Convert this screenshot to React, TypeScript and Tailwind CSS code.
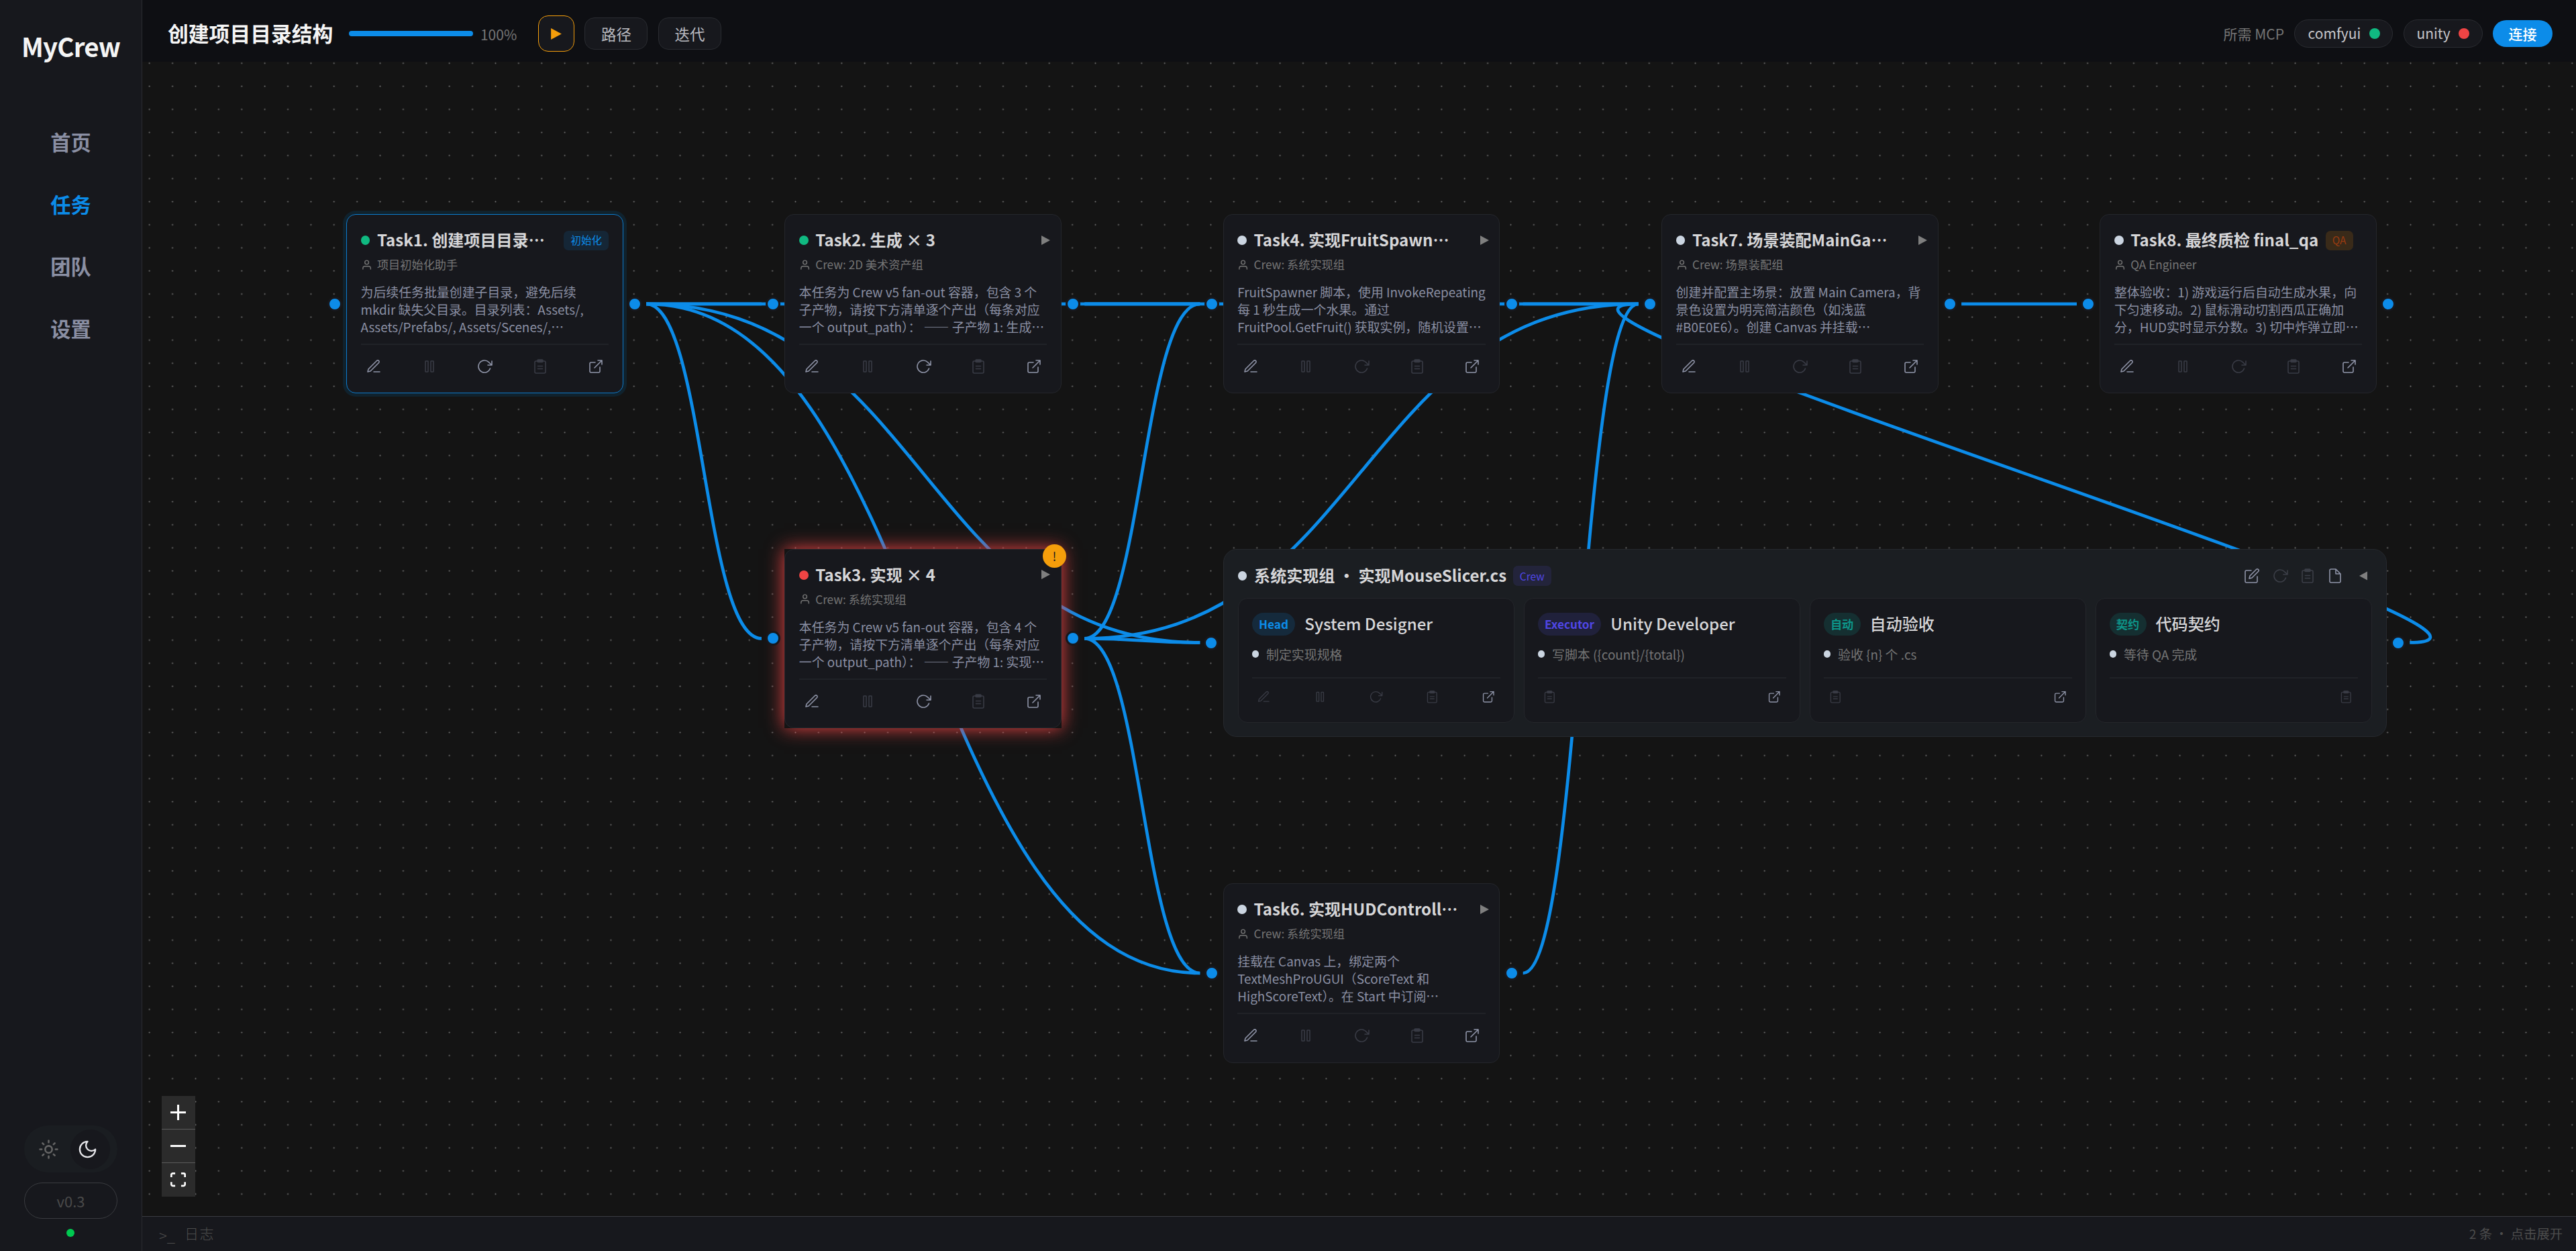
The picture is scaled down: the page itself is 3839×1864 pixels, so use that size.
import type { ReactNode } from "react";

const ORIGIN_X = 212;
const ORIGIN_Y = 92;
const NODE_W = 412.6;

type Tag = { label: string; cls: string };
type Action = "edit" | "pause" | "retry" | "clip" | "open" | "compose" | "file";

type TaskNode = {
  id: string;
  x: number;
  y: number;
  title: string;
  owner: string;
  lines: string[];
  dot: string;
  tag?: Tag;
  expandable?: boolean;
  enabled: Action[];
  variant?: "selected" | "failed";
};

const ROW1 = 319.1;
const ROW2 = 817.7;
const ROW3 = 1316.3;
const COL = [516, 1169.3, 1822.7, 2476.1, 3129.4];

const GREEN = "bg-[#10b981]";
const RED = "bg-[#ef4444]";
const IDLE = "bg-[#cbd5e1]";

const tasks: TaskNode[] = [
  {
    id: "t1",
    x: COL[0],
    y: ROW1,
    title: "Task1. 创建项目目录…",
    owner: "项目初始化助手",
    lines: ["为后续任务批量创建子目录，避免后续", "mkdir 缺失父目录。目录列表：Assets/,", "Assets/Prefabs/, Assets/Scenes/,…"],
    dot: GREEN,
    tag: { label: "初始化", cls: "bg-[#152636] text-[#0c8ce9]" },
    enabled: ["edit", "retry", "open"],
    variant: "selected",
  },
  {
    id: "t2",
    x: COL[1],
    y: ROW1,
    title: "Task2. 生成 × 3",
    owner: "Crew: 2D 美术资产组",
    lines: ["本任务为 Crew v5 fan-out 容器，包含 3 个", "子产物，请按下方清单逐个产出（每条对应", "一个 output_path）： —— 子产物 1: 生成…"],
    dot: GREEN,
    expandable: true,
    enabled: ["edit", "retry", "open"],
  },
  {
    id: "t4",
    x: COL[2],
    y: ROW1,
    title: "Task4. 实现FruitSpawn…",
    owner: "Crew: 系统实现组",
    lines: ["FruitSpawner 脚本，使用 InvokeRepeating", "每 1 秒生成一个水果。通过", "FruitPool.GetFruit() 获取实例，随机设置…"],
    dot: IDLE,
    expandable: true,
    enabled: ["edit", "open"],
  },
  {
    id: "t7",
    x: COL[3],
    y: ROW1,
    title: "Task7. 场景装配MainGa…",
    owner: "Crew: 场景装配组",
    lines: ["创建并配置主场景：放置 Main Camera，背", "景色设置为明亮简洁颜色（如浅蓝", "#B0E0E6）。创建 Canvas 并挂载…"],
    dot: IDLE,
    expandable: true,
    enabled: ["edit", "open"],
  },
  {
    id: "t8",
    x: COL[4],
    y: ROW1,
    title: "Task8. 最终质检 final_qa",
    owner: "QA Engineer",
    lines: ["整体验收：1) 游戏运行后自动生成水果，向", "下匀速移动。2) 鼠标滑动切割西瓜正确加", "分，HUD实时显示分数。3) 切中炸弹立即…"],
    dot: IDLE,
    tag: { label: "QA", cls: "bg-[#392a19] text-[#9a3b10]" },
    enabled: ["edit", "open"],
  },
  {
    id: "t3",
    x: COL[1],
    y: ROW2,
    title: "Task3. 实现 × 4",
    owner: "Crew: 系统实现组",
    lines: ["本任务为 Crew v5 fan-out 容器，包含 4 个", "子产物，请按下方清单逐个产出（每条对应", "一个 output_path）： —— 子产物 1: 实现…"],
    dot: RED,
    expandable: true,
    enabled: ["edit", "retry", "open"],
    variant: "failed",
  },
  {
    id: "t6",
    x: COL[2],
    y: ROW3,
    title: "Task6. 实现HUDControll…",
    owner: "Crew: 系统实现组",
    lines: ["挂载在 Canvas 上，绑定两个", "TextMeshProUGUI（ScoreText 和", "HighScoreText）。在 Start 中订阅…"],
    dot: IDLE,
    expandable: true,
    enabled: ["edit", "open"],
  },
];

const steps: { role: Tag; name: string; status: string; actions: Action[]; align: string }[] = [
  {
    role: { label: "Head", cls: "bg-[#152a3c] text-[#0c8ce9]" },
    name: "System Designer",
    status: "制定实现规格",
    actions: ["edit", "pause", "retry", "clip", "open"],
    align: "justify-between",
  },
  {
    role: { label: "Executor", cls: "bg-[#20213b] text-[#4f46e5]" },
    name: "Unity Developer",
    status: "写脚本 ({count}/{total})",
    actions: ["clip", "open"],
    align: "justify-between",
  },
  {
    role: { label: "自动", cls: "bg-[#152f31] text-[#0d9488]" },
    name: "自动验收",
    status: "验收 {n} 个 .cs",
    actions: ["clip", "open"],
    align: "justify-between",
  },
  {
    role: { label: "契约", cls: "bg-[#152f31] text-[#0d9488]" },
    name: "代码契约",
    status: "等待 QA 完成",
    actions: ["clip"],
    align: "justify-end",
  },
];

/* ---------- edges ---------- */

const OUT = (col: number, y: number) => [COL[col] + NODE_W + 34.4, y];
const IN = (col: number, y: number) => [COL[col] - 34.4, y];
const Y1 = 452.8;
const Y2 = 951.4;
const Y3 = 1450;
const YG = 957.4;

const links: [number[], number[]][] = [
  [OUT(0, Y1), IN(1, Y1)],
  [OUT(0, Y1), IN(1, Y2)],
  [OUT(0, Y1), IN(2, Y1)],
  [OUT(0, Y1), IN(2, YG)],
  [OUT(0, Y1), IN(2, Y3)],
  [OUT(1, Y1), IN(2, Y1)],
  [OUT(1, Y1), IN(3, Y1)],
  [OUT(1, Y2), IN(2, Y1)],
  [OUT(1, Y2), IN(2, YG)],
  [OUT(1, Y2), IN(2, Y3)],
  [OUT(1, Y2), IN(3, Y1)],
  [OUT(2, Y1), IN(3, Y1)],
  [[3591.2, YG], IN(3, Y1)],
  [OUT(2, Y3), IN(3, Y1)],
  [OUT(3, Y1), IN(4, Y1)],
];

function bezier([sx, sy]: number[], [tx, ty]: number[]) {
  const d = tx - sx;
  const c = d >= 0 ? d / 2 : 0.25 * 25 * Math.sqrt(-d / 1.7193) * 1.7193;
  return `M${sx},${sy} C${sx + c},${sy} ${tx - c},${ty} ${tx},${ty}`;
}

/* ---------- icons ---------- */

const shapes: Record<Action, ReactNode> = {
  edit: <path d="M12 20h9M16.5 3.5a2.121 2.121 0 0 1 3 3L7 19l-4 1 1-4L16.5 3.5z" />,
  pause: (
    <>
      <rect x="6" y="4" width="4" height="16" rx="0.6" />
      <rect x="14" y="4" width="4" height="16" rx="0.6" />
    </>
  ),
  retry: <path d="M23 4v6h-6M20.49 15a9 9 0 1 1-2.12-9.36L23 10" />,
  clip: (
    <>
      <path d="M16 4h2a2 2 0 0 1 2 2v14a2 2 0 0 1-2 2H6a2 2 0 0 1-2-2V6a2 2 0 0 1 2-2h2M8.5 11.5h7M8.5 15.5h7" />
      <rect x="8" y="2" width="8" height="3.4" rx="1" fill="currentColor" />
    </>
  ),
  open: <path d="M18 13v6a2 2 0 0 1-2 2H5a2 2 0 0 1-2-2V8a2 2 0 0 1 2-2h6M15 3h6v6M10 14L21 3" />,
  compose: (
    <path d="M11 4H4a2 2 0 0 0-2 2v14a2 2 0 0 0 2 2h14a2 2 0 0 0 2-2v-7M18.5 2.5a2.121 2.121 0 0 1 3 3L12 15l-4 1 1-4 9.5-9.5z" />
  ),
  file: <path d="M13 2H6a2 2 0 0 0-2 2v16a2 2 0 0 0 2 2h12a2 2 0 0 0 2-2V9l-7-7zM13 2v7h7" />,
};

function Icon({ name, cls }: { name: Action; cls: string }) {
  return (
    <svg viewBox="0 0 24 24" className={cls} fill="none" stroke="currentColor" strokeWidth="1.6" strokeLinecap="round" strokeLinejoin="round">
      {shapes[name]}
    </svg>
  );
}

function Triangle({ cls }: { cls: string }) {
  return (
    <svg viewBox="0 0 13 14" className={cls} fill="currentColor">
      <path d="M0 0L13 7L0 14z" />
    </svg>
  );
}

/* ---------- nodes ---------- */

function Port({ side, bordered }: { side: "left" | "right"; bordered?: boolean }) {
  const place =
    side === "left" ? (bordered ? "-left-[29.3px]" : "-left-[28.2px]") : bordered ? "-right-[29.5px]" : "-right-[28.5px]";
  return <span className={`absolute top-1/2 -mt-[11px] size-[22px] rounded-full border-[3px] border-[#17181d] bg-[#0c8ce9] ${place}`} />;
}

const rowActions: Action[] = ["edit", "pause", "retry", "clip", "open"];

function Task({ t }: { t: TaskNode }) {
  const shell =
    t.variant === "selected"
      ? "rounded-[14px] border-[#0c7bcd] shadow-[0_0_0_5px_#10222d]"
      : "rounded-[14px] border-[#24262b]";
  return (
    <div
      className={`absolute h-[267.4px] w-[412.6px] ${t.variant === "failed" ? "shadow-[0_0_26px_#ef4444]" : ""}`}
      style={{ left: t.x - ORIGIN_X, top: t.y - ORIGIN_Y }}
    >
      <div className={`flex h-full flex-col border bg-[#17181d] px-[20.5px] pt-[23px] ${shell}`}>
        <div className="flex h-[30px] items-center">
          <span className={`mr-[10.6px] size-[13.8px] shrink-0 rounded-full ${t.dot}`} />
          <span className="-mt-[2px] text-[24.07px] leading-[30px] font-bold whitespace-nowrap text-[#d6d6d8]">{t.title}</span>
          {t.tag && (
            <span
              className={`flex h-[29px] shrink-0 items-center rounded-[7px] px-[10.2px] text-[15.5px] whitespace-nowrap ${t.tag.cls} ${
                t.id === "t1" ? "ml-auto" : "ml-[10.3px]"
              }`}
            >
              {t.tag.label}
            </span>
          )}
          {t.expandable && <Triangle cls="-mr-[5px] -mt-px ml-auto h-[14px] w-[13px] shrink-0 text-[#7f7f7f]" />}
        </div>
        <div className="mt-[9px] flex h-[24px] items-center text-[#757575]">
          <svg viewBox="0 0 24 24" className="mr-[7.2px] size-[17.2px] shrink-0" fill="none" stroke="currentColor" strokeWidth="2" strokeLinecap="round" strokeLinejoin="round">
            <path d="M20 21v-2a4 4 0 0 0-4-4H8a4 4 0 0 0-4 4v2" />
            <circle cx="12" cy="7" r="4" />
          </svg>
          <span className="text-[17.2px] whitespace-nowrap">{t.owner}</span>
        </div>
        <div className="mt-[16px] text-[18.9px] leading-[26px] whitespace-nowrap text-[#8a8fa3]">
          {t.lines.map((l) => (
            <div key={l}>{l}</div>
          ))}
        </div>
        <div className="mt-[12px] flex justify-between border-t-2 border-[#202227] pt-[20px]">
          {rowActions.map((a) => (
            <span key={a} className="flex w-[38.7px] justify-center">
              <Icon name={a} cls={`size-[24px] ${t.enabled.includes(a) ? "text-[#8f94a8]" : "text-[#393b45]"}`} />
            </span>
          ))}
        </div>
      </div>
      <Port side="left" />
      <Port side="right" />
      {t.variant === "failed" && (
        <span className="absolute -top-[7px] -right-[7px] flex size-[35px] items-center justify-center rounded-full bg-[#f59e0b] text-[18px] leading-none text-[#17181d]">
          !
        </span>
      )}
    </div>
  );
}

function CrewGroup() {
  return (
    <div
      className="absolute h-[280px] w-[1734px] rounded-[20px] border border-[#26292e] bg-[#1b1e22] px-[21px] pt-[24px]"
      style={{ left: COL[2] - ORIGIN_X, top: ROW2 - ORIGIN_Y }}
    >
      <div className="flex h-[32px] items-center">
        <span className={`-mt-px mr-[10.6px] size-[13.8px] rounded-full ${IDLE}`} />
        <span className="-mt-[3px] text-[24.07px] leading-[32px] font-bold whitespace-nowrap text-[#d6d6d8]">系统实现组 · 实现MouseSlicer.cs</span>
        <span className="-mt-px ml-[9.5px] flex h-[30px] items-center rounded-[7px] bg-[#23243b] px-[10.2px] text-[15.5px] text-[#4f46e5]">Crew</span>
        <div className="-mt-px mr-[7px] ml-auto flex items-center gap-[17.4px]">
          <Icon name="compose" cls="size-[24px] text-[#8f94a8]" />
          <Icon name="retry" cls="size-[24px] text-[#3b3e47]" />
          <Icon name="clip" cls="size-[24px] text-[#3b3e47]" />
          <Icon name="file" cls="size-[24px] text-[#8f94a8]" />
          <Triangle cls="ml-[6px] h-[14px] w-[12px] rotate-180 text-[#7f7f7f]" />
        </div>
      </div>
      <div className="mt-[16px] flex gap-[13.8px]">
        {steps.map((s, i) => (
          <div key={s.name} className="h-[186px] w-[412.6px] rounded-[14px] border border-[#24262b] bg-[#17181d] px-[20px] pt-[21px]">
            <div className="flex h-[34px] items-center gap-[14px]">
              <span className={`flex h-[34px] items-center rounded-full px-[10.3px] text-[17.2px] font-bold whitespace-nowrap ${s.role.cls}`}>
                {s.role.label}
              </span>
              <span className="-mt-[2px] text-[24.07px] leading-[34px] font-medium whitespace-nowrap text-[#d6d6d8]">{s.name}</span>
            </div>
            <div className="mt-[15px] flex h-[26px] items-center">
              <span className={`mr-[10.8px] size-[10.6px] rounded-full ${IDLE}`} />
              <span className="text-[18.9px] leading-[26px] whitespace-nowrap text-[#757575]">{s.status}</span>
            </div>
            <div className={`mt-[21px] flex border-t-2 border-[#202227] pt-[17px] ${s.align}`}>
              {s.actions.map((a) => (
                <span key={a} className="flex w-[35.6px] justify-center">
                  <Icon name={a} cls={`size-[20.6px] ${a === "open" && i < 3 ? "text-[#8f94a8]" : "text-[#393b45]"}`} />
                </span>
              ))}
            </div>
          </div>
        ))}
      </div>
      <Port side="left" bordered />
      <Port side="right" bordered />
    </div>
  );
}

/* ---------- chrome ---------- */

function Sidebar() {
  const nav = [
    { label: "首页", cls: "text-[#8a8fa3]" },
    { label: "任务", cls: "text-[#0c8ce9]" },
    { label: "团队", cls: "text-[#8a8fa3]" },
    { label: "设置", cls: "text-[#8a8fa3]" },
  ];
  return (
    <aside className="flex w-[212px] shrink-0 flex-col items-center border-r border-[#2a2c31] bg-[#17181d]">
      <div className="mt-[43px] h-[50px] text-[38.5px] leading-[50px] font-bold tracking-[-0.8px] text-[#f5f5f5]">MyCrew</div>
      <nav className="mt-[72px] flex flex-col items-center">
        {nav.map((n) => (
          <a key={n.label} className={`flex h-[92.5px] items-center text-[30.2px] leading-none font-bold ${n.cls}`}>
            {n.label}
          </a>
        ))}
      </nav>
      <div className="mt-auto flex flex-col items-center pb-[21px]">
        <div className="flex h-[70px] w-[139px] items-center rounded-full bg-[#1a1d21] px-[11px]">
          <span className="flex size-[51px] items-center justify-center">
            <svg viewBox="0 0 24 24" className="size-[31px] text-[#666666]" fill="none" stroke="currentColor" strokeWidth="2" strokeLinecap="round">
              <circle cx="12" cy="12" r="4" />
              <path d="M12 2v2M12 20v2M4.93 4.93l1.41 1.41M17.66 17.66l1.41 1.41M2 12h2M20 12h2M6.34 17.66l-1.41 1.41M19.07 4.93l-1.41 1.41" />
            </svg>
          </span>
          <span className="ml-[7px] flex size-[59px] shrink-0 items-center justify-center rounded-full bg-[#17181d]">
            <svg viewBox="0 0 24 24" className="-ml-[9px] size-[31px] text-[#e8e8ec]" fill="none" stroke="currentColor" strokeWidth="1.8" strokeLinecap="round" strokeLinejoin="round">
              <path d="M12 3a6 6 0 0 0 9 9 9 9 0 1 1-9-9Z" />
            </svg>
          </span>
        </div>
        <div className="mt-[15px] flex h-[54px] w-[139px] items-center justify-center rounded-[27px] border border-[#3a3c40] text-[22px] text-[#4a4a4a]">
          v0.3
        </div>
        <span className="mt-[15px] -ml-px size-[12px] rounded-full bg-[#00c950]" />
      </div>
    </aside>
  );
}

function TopBar() {
  return (
    <header className="flex h-[92px] shrink-0 items-center bg-[#0e0f13] pr-[35px] pl-[38px] whitespace-nowrap">
      <h1 className="mt-[5px] text-[30.8px] leading-[40px] font-bold text-[#f5f5f5]">创建项目目录结构</h1>
      <span className="mt-[8px] ml-[23.6px] h-[8px] w-[185px] rounded-full bg-[#0c8ce9]" />
      <span className="mt-[11px] ml-[11px] w-[55px] text-[21px] leading-none text-[#757575]">100%</span>
      <button className="mt-[8px] ml-[31px] flex size-[54px] items-center justify-center rounded-[15px] border border-[#f59e0b] bg-[#17181d]">
        <Triangle cls="ml-px h-[17px] w-[16px] text-[#f59e0b]" />
      </button>
      {["路径", "迭代"].map((b) => (
        <button key={b} className="mt-[8px] ml-[15.5px] flex h-[48px] w-[94px] items-center justify-center rounded-[15px] border border-[#2a2c31] bg-[#17181d] text-[22.5px] leading-none text-[#b9bac0]">
          {b}
        </button>
      ))}
      <div className="mt-[8px] ml-auto flex items-center">
        <span className="text-[21px] leading-none text-[#757575]">所需 MCP</span>
        <span className="ml-[15px] flex h-[42px] w-[147px] items-center justify-between rounded-full border border-[#2a2c31] bg-[#17181d] pr-[18.5px] pl-[19.5px] text-[21px] leading-none text-[#c6c6ca]">
          <span className="-mt-[2px]">comfyui</span>
          <i className={`size-[15.5px] rounded-full ${GREEN}`} />
        </span>
        <span className="ml-[16px] flex h-[42px] w-[118px] items-center justify-between rounded-full border border-[#2a2c31] bg-[#17181d] pr-[19.5px] pl-[18.5px] text-[21px] leading-none text-[#c6c6ca]">
          <span className="-mt-[2px]">unity</span>
          <i className={`size-[15.5px] rounded-full ${RED}`} />
        </span>
        <button className="ml-[15px] flex h-[40px] w-[89px] items-center justify-center rounded-full bg-[#0c8ce9] text-[21px] leading-none font-medium text-white">连接</button>
      </div>
    </header>
  );
}

function ZoomControls() {
  return (
    <div className="absolute top-[1541px] left-[29px] flex w-[50px] flex-col bg-[#2b2b2b] text-[#fefefe]">
      <span className="flex h-[50px] items-center justify-center border-b border-[#5b5b5b] pr-px">
        <svg viewBox="0 0 32 32" className="size-[23px]" fill="currentColor">
          <path d="M32 18.133H18.133V32h-4.266V18.133H0v-4.266h13.867V0h4.266v13.867H32z" />
        </svg>
      </span>
      <span className="flex h-[50px] items-center justify-center border-b border-[#5b5b5b] pr-px">
        <svg viewBox="0 0 32 5" className="w-[23px]" fill="currentColor">
          <path d="M0 0h32v4.2H0z" />
        </svg>
      </span>
      <span className="flex h-[50px] items-center justify-center pr-px">
        <svg viewBox="0 0 32 30" className="w-[23px]" fill="currentColor">
          <path d="M3.692 4.63c0-.53.4-.938.939-.938h5.215V0H4.708C2.13 0 0 2.054 0 4.63v5.216h3.692V4.631zM27.354 0h-5.2v3.692h5.17c.53 0 .984.4.984.939v5.215H32V4.631A4.624 4.624 0 0027.354 0zm.954 24.83c0 .532-.4.94-.939.94h-5.215v3.768h5.215c2.577 0 4.631-2.13 4.631-4.707v-5.139h-3.692v5.139zm-23.677.94c-.531 0-.939-.4-.939-.94v-5.138H0v5.139c0 2.577 2.13 4.707 4.708 4.707h5.138V25.77H4.631z" />
        </svg>
      </span>
    </div>
  );
}

function Canvas() {
  return (
    <main className="relative flex-1 overflow-hidden bg-[#141414]">
      <svg className="absolute inset-0 h-full w-full">
        <defs>
          <pattern id="grid" x="-6.5" y="-15" width="34.386" height="34.386" patternUnits="userSpaceOnUse">
            <circle cx="17.2" cy="17.2" r="1.05" fill="#777777" />
          </pattern>
        </defs>
        <rect width="100%" height="100%" fill="url(#grid)" />
      </svg>
      <svg className="absolute inset-0" width="3627" height="1720" viewBox="212 92 3627 1720" fill="none" stroke="#0c8ce9" strokeWidth="4.7">
        {links.map(([a, b], i) => (
          <path key={i} d={bezier(a, b)} />
        ))}
      </svg>
      {tasks.map((t) => (
        <Task key={t.id} t={t} />
      ))}
      <CrewGroup />
      <ZoomControls />
    </main>
  );
}

export default function App() {
  return (
    <div lang="zh-CN" className="flex h-[1864px] w-[3839px] overflow-hidden bg-[#141414] font-['Noto_Sans_CJK_SC',sans-serif]">
      <Sidebar />
      <div className="flex min-w-0 flex-1 flex-col">
        <TopBar />
        <Canvas />
        <footer className="flex h-[52px] shrink-0 items-center border-t border-[#3a3c42] bg-[#17181d] pr-[20px] pl-[25px] leading-none font-light text-[#4d4d4d]">
          <span className="mt-[2px] text-[22px]">&gt;_</span>
          <span className="-mt-[2px] ml-[14px] text-[21px] tracking-[1.5px]">日志</span>
          <span className="ml-auto text-[19.3px] font-normal">2 条 · 点击展开</span>
        </footer>
      </div>
    </div>
  );
}
